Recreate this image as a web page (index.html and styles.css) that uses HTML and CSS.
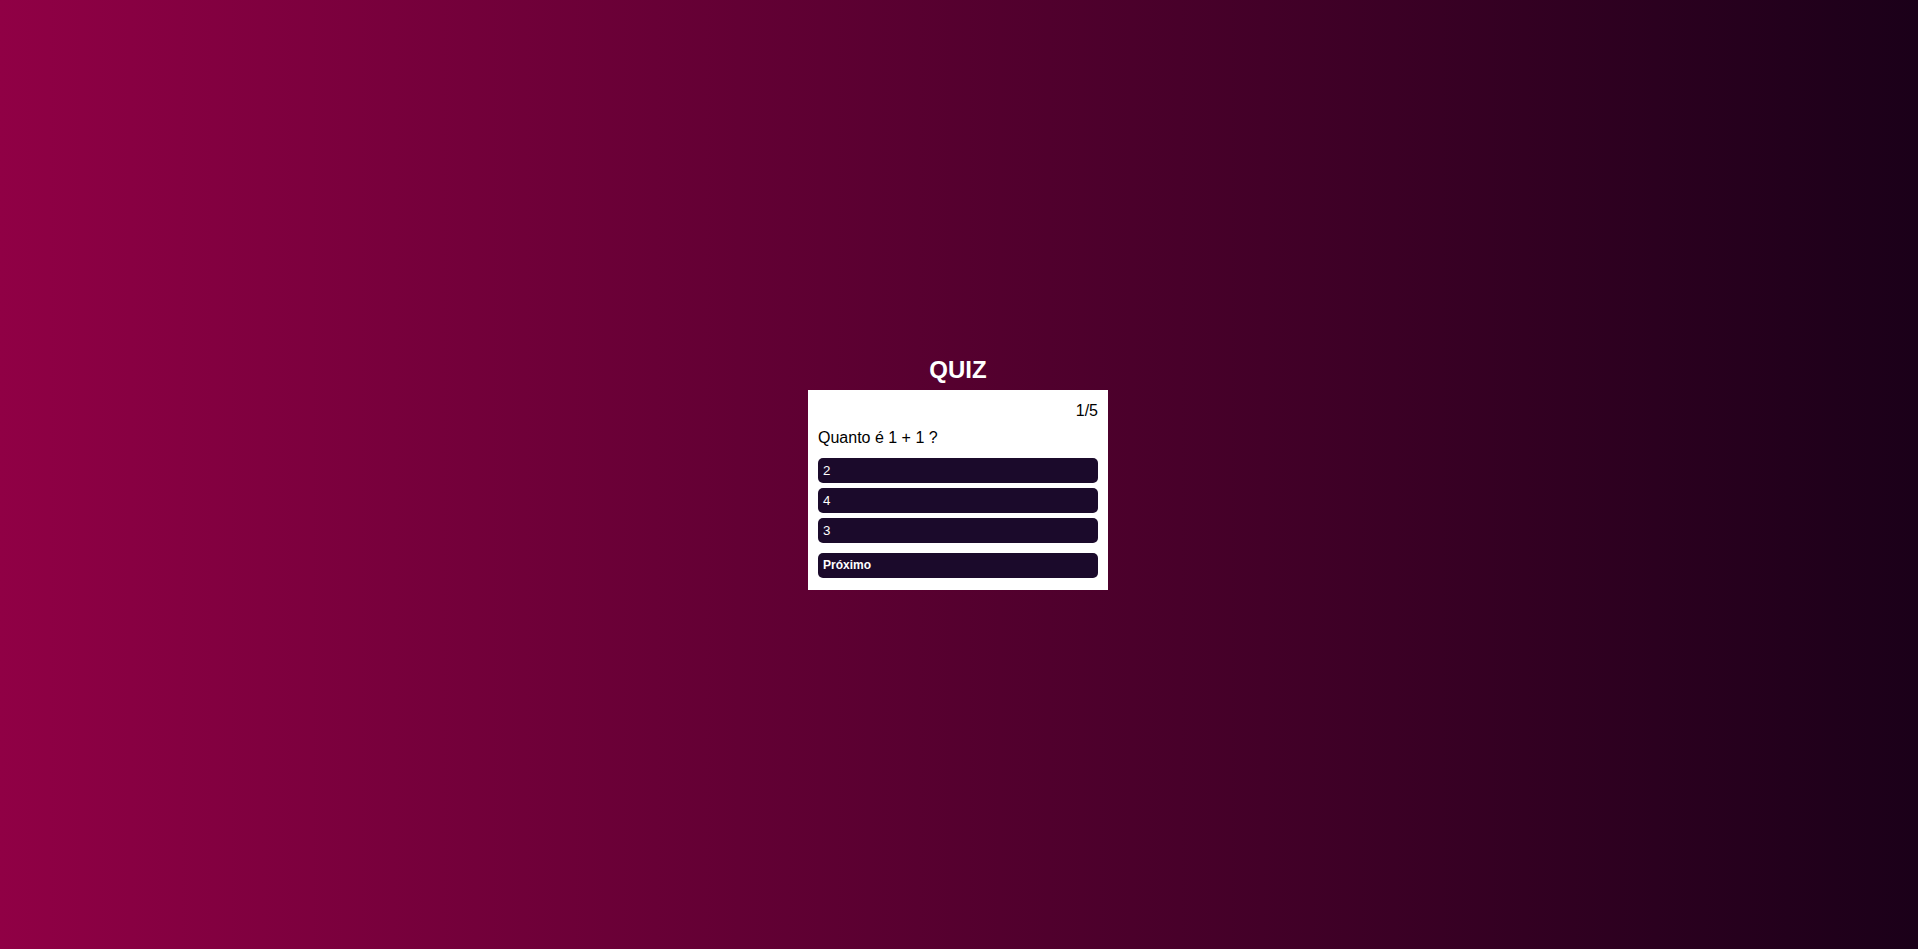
FILE: index.html
```html
<!DOCTYPE html>
<html lang="pt">
<head>
<meta charset="utf-8">
<title>Quiz</title>
<link rel="stylesheet" href="styles.css">
</head>
<body>
  <main class="quiz">
    <h1 class="title">QUIZ</h1>
    <section class="card">
      <div class="count">1/5</div>
      <div class="question">Quanto é 1 + 1 ?</div>
      <div class="answers">
        <button class="answer">2</button>
        <button class="answer">4</button>
        <button class="answer">3</button>
      </div>
      <button class="next">Próximo</button>
    </section>
  </main>
</body>
</html>
```

FILE: styles.css
```css
html, body {
  margin: 0;
  height: 100%;
}

body {
  background: linear-gradient(to right, #900045 0%, #1b0019 100%);
  font-family: "Liberation Sans", Arial, sans-serif;
  display: flex;
  align-items: center;
  justify-content: center;
}

.quiz {
  display: flex;
  flex-direction: column;
  align-items: center;
  margin: -4px 0 0 -2px;
}

.title {
  margin: 0 0 6px;
  font-size: 24px;
  font-weight: bold;
  color: #ffffff;
  line-height: normal;
}

.card {
  width: 300px;
  box-sizing: border-box;
  padding: 12px 10px 12px;
  background: #ffffff;
  color: #000000;
}

.count {
  text-align: right;
  font-size: 16px;
  line-height: normal;
}

.question {
  margin-top: 9px;
  font-size: 16px;
  line-height: normal;
}

.answers {
  margin-top: 11px;
  display: flex;
  flex-direction: column;
  gap: 5px;
}

.answer,
.next {
  display: block;
  width: 100%;
  height: 25px;
  box-sizing: border-box;
  border: none;
  border-radius: 5px;
  background: #1b0a2b;
  color: #ffffff;
  font-family: "Liberation Sans", Arial, sans-serif;
  font-size: 13.33px;
  text-align: left;
  padding: 0 5px;
  margin: 0;
}

.next {
  margin-top: 10px;
  font-size: 12px;
  font-weight: bold;
}
```
